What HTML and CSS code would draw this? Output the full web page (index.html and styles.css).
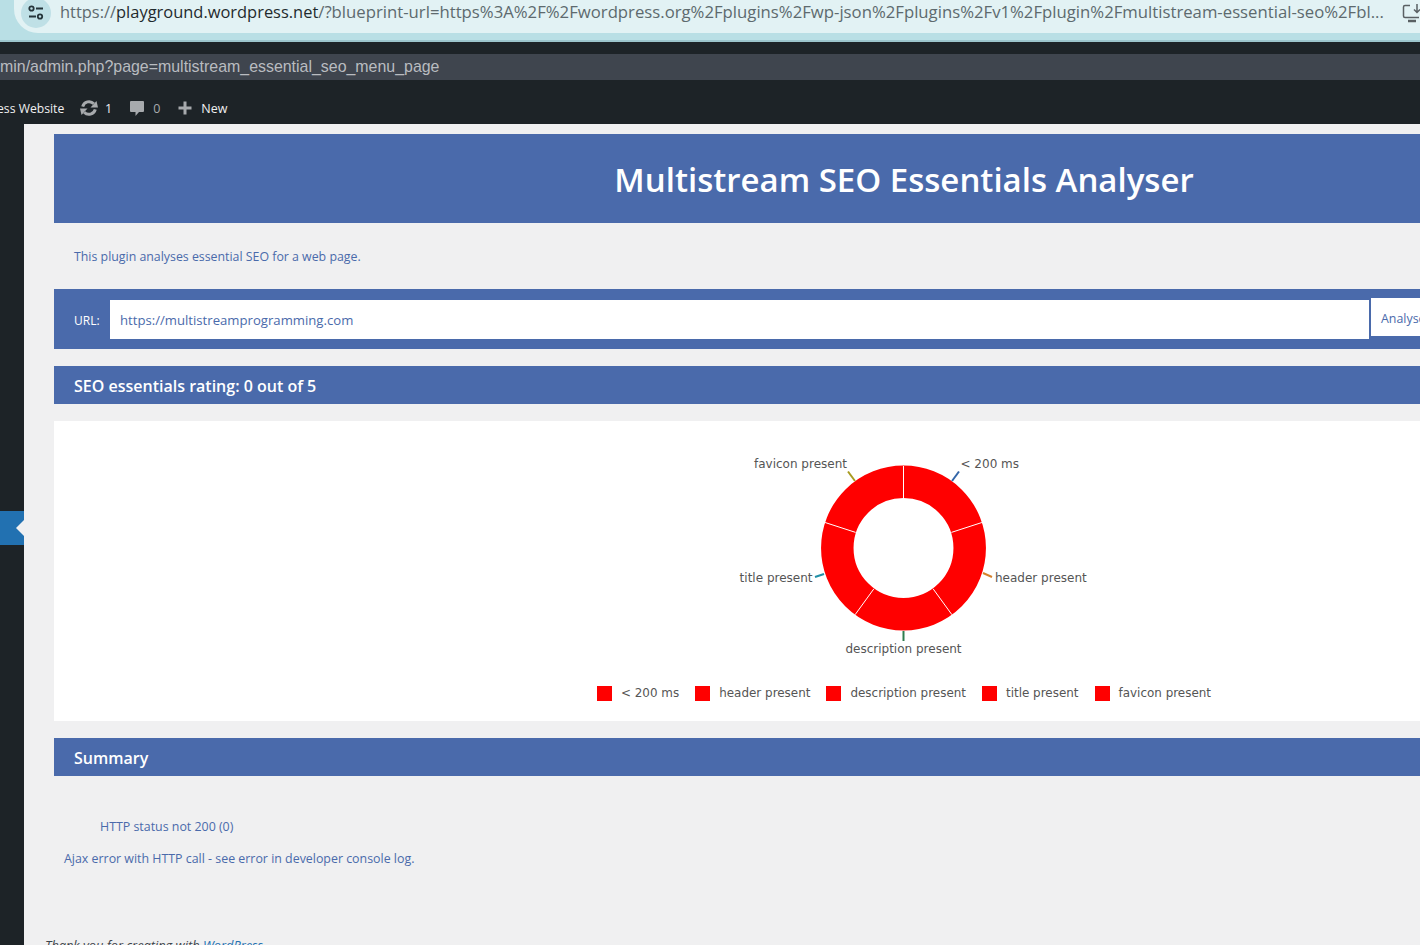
FILE: index.html
```html
<!DOCTYPE html>
<html lang="en">
<head>
<meta charset="utf-8">
<title>Multistream SEO Essentials Analyser</title>
<link rel="stylesheet" href="styles.css">
</head>
<body>
<header class="browser">
  <div class="omnibox">
    <span class="tune">
      <svg width="18" height="18" viewBox="0 0 18 18" fill="none" stroke="#24343a" stroke-width="1.800"><circle cx="4.500" cy="4.500" r="2.200"/><path d="M9 4.500h7M2 12.500h7"/><circle cx="13" cy="12.500" r="2.200"/></svg>
    </span>
    <span class="url"><span class="dim">https://</span>playground.wordpress.net<span class="dim rest">/?blueprint-url=https%3A%2F%2Fwordpress.org%2Fplugins%2Fwp-json%2Fplugins%2Fv1%2Fplugin%2Fmultistream-essential-seo%2Fbl...</span></span>
    <svg class="install" width="20" height="20" viewBox="0 0 20 20" fill="none" stroke="#5a6063" stroke-width="1.500"><path d="M8 2.500H3a1.500 1.500 0 0 0-1.500 1.500v9A1.500 1.500 0 0 0 3 14.500h14"/><path d="M6 18h8" stroke-width="2.500"/><path d="M15 1v8M12 6.500l3 3 3-3"/></svg>
  </div>
</header>
<div class="gap"></div>
<div class="addr">min/admin.php?page=multistream_essential_seo_menu_page</div>
<nav class="adminbar">
  <span class="site">ess Website</span>
  <span class="ab-item">
    <svg width="20" height="20" viewBox="0 0 20 20" fill="none"><g stroke="#a7aaad" stroke-width="3"><path d="M3.700 8.600A6.500 6.500 0 0 1 14.800 5.800"/><path d="M16.300 11.400A6.500 6.500 0 0 1 5.200 14.200"/></g><g fill="#a7aaad"><path d="M19 9.500h-7.500L17.500 3z"/><path d="M1 10.500h7.500L2.500 17z"/></g></svg>
    <span class="count">1</span>
  </span>
  <span class="ab-item">
    <svg width="20" height="20" viewBox="0 0 20 20" fill="#a7aaad"><path d="M4 3h12a1 1 0 0 1 1 1v9a1 1 0 0 1-1 1h-4l-3.500 4v-4H4a1 1 0 0 1-1-1V4a1 1 0 0 1 1-1z"/></svg>
    <span class="count muted">0</span>
  </span>
  <span class="ab-item">
    <svg width="20" height="20" viewBox="0 0 20 20" fill="#a7aaad"><path d="M8.500 3.500h3v5h5v3h-5v5h-3v-5h-5v-3h5z"/></svg>
    <span class="count">New</span>
  </span>
</nav>
<div class="wp">
  <aside class="sidebar"><span class="collapse"></span></aside>
  <main class="content">
    <h1 class="hero">Multistream SEO Essentials Analyser</h1>
    <p class="intro">This plugin analyses essential SEO for a web page.</p>
    <form class="urlbar">
      <label class="urllabel">URL:</label>
      <div class="urlinput">https://multistreamprogramming.com</div>
      <div class="analyse">Analyse</div>
    </form>
    <h2 class="band">SEO essentials rating: 0 out of 5</h2>
    <section class="chartcard">
      <svg class="donut" width="400" height="230" viewBox="0.500 0 400 230">
        <circle cx="200" cy="117" r="66.200" fill="none" stroke="#ff0000" stroke-width="32.500"/>
        <g stroke="#ffffff" stroke-width="1">
          <path d="M200 35v32"/>
          <path d="M278.400 91.500l-30.500 9.900"/>
          <path d="M248.400 183.700l-18.800-25.900"/>
          <path d="M151.600 183.700l18.800-25.900"/>
          <path d="M121.600 91.500l30.500 9.900"/>
        </g>
        <g fill="none" stroke-width="2">
          <path d="M248.500 50l7-9.500" stroke="#3366a8"/>
          <path d="M279.500 142l9 4" stroke="#d5812b"/>
          <path d="M200 200v10" stroke="#2f7d4f"/>
          <path d="M120.500 143l-9 3" stroke="#2090a8"/>
          <path d="M151.500 50l-7-9.500" stroke="#a89b20"/>
        </g>
        <g class="slabel">
          <text x="257" y="37">&lt; 200 ms</text>
          <text x="291.500" y="151">header present</text>
          <text x="200" y="222" text-anchor="middle">description present</text>
          <text x="109" y="151" text-anchor="end">title present</text>
          <text x="143.500" y="37" text-anchor="end">favicon present</text>
        </g>
      </svg>
      <ul class="legend">
        <li><i class="swatch"></i>&lt; 200 ms</li>
        <li><i class="swatch"></i>header present</li>
        <li><i class="swatch"></i>description present</li>
        <li><i class="swatch"></i>title present</li>
        <li><i class="swatch"></i>favicon present</li>
      </ul>
    </section>
    <h2 class="band">Summary</h2>
    <p class="status">HTTP status not 200 (0)</p>
    <p class="ajax">Ajax error with HTTP call - see error in developer console log.</p>
    <p class="thanks">Thank you for creating with <a href="#">WordPress</a>.</p>
  </main>
</div>
</body>
</html>
```
FILE: styles.css
```css
* { box-sizing: border-box; }
html, body { margin: 0; height: 945px; overflow: hidden; }
body { width: 1420px; background: #1d2327; font-family: "Open Sans", "Noto Sans", sans-serif; }

.browser { height: 42px; background: #b9dfe5; border-bottom: 2px solid #9cc5cc; overflow: hidden; }
.omnibox { height: 33px; margin-left: 14px; background: #e2f2f4; display: flex; align-items: center; padding-left: 7px; position: relative; border-radius: 0 0 0 24px; }
.tune { width: 30px; height: 30px; margin-top: -8px; border-radius: 50%; background: #bfe0e6; display: flex; align-items: center; justify-content: center; flex: none; }
.url { margin-left: 9px; margin-top: -10px; font-size: 16.450px; color: #1f2a2d; white-space: nowrap; flex: none; }
.dim { color: #5d6a6e; }
.rest { font-size: 16.730px; }
.install { position: absolute; left: 1388px; top: 3px; }

.gap { height: 12px; background: #1d2327; }
.addr { height: 26px; background: #3f454e; color: #b9bcc0; font-family: "Liberation Sans", Arial, sans-serif; font-size: 15.930px; line-height: 26px; white-space: nowrap; }

.adminbar { height: 44px; display: flex; align-items: center; padding-top: 12px; color: #f0f0f1; font-size: 12.500px; }
.site { width: 82px; margin-left: -3px; font-size: 12.200px; flex: none; }
.ab-item { display: flex; align-items: center; margin-right: 15px; }
.ab-item svg { margin-right: 6px; }
.count { color: #f0f0f1; }
.count.muted { color: #a7aaad; }

.wp { display: flex; height: 821px; overflow: hidden; }
.sidebar { width: 24px; flex: none; background: #1d2327; padding-top: 387px; }
.collapse { display: block; height: 34px; background: #2271b1; position: relative; }
.collapse::after { content: ""; position: absolute; right: 0; top: 9px; border: 8px solid transparent; border-right-color: #f0f0f1; border-left-width: 0; }

.content { width: 1730px; flex: none; background: #f0f0f1; padding: 10px 0 0 30px; color: #4a6aab; }
.hero { width: 1700px; height: 89px; margin: 0; background: #4a6aab; color: #fff; font-size: 33px; font-weight: 600; line-height: 91px; text-align: center; }
.intro { margin: 0; height: 66px; padding: 25px 0 0 20px; font-size: 12.350px; line-height: 18px; }
.urlbar { width: 1700px; height: 60px; background: #4a6aab; display: flex; align-items: flex-start; padding: 9px 0 0 20px; }
.urllabel { color: #fff; font-size: 12px; line-height: 18px; width: 36px; margin-top: 14px; flex: none; }
.urlinput { width: 1259px; height: 39px; margin-top: 2px; background: #fff; padding-left: 10px; font-size: 13.150px; line-height: 40px; flex: none; }
.analyse { width: 90px; height: 38px; margin-left: 2px; background: #fff; padding-left: 10px; font-size: 12.400px; line-height: 42px; flex: none; }
.band { width: 1700px; height: 38px; margin: 17px 0 0; padding-left: 20px; background: #4a6aab; color: #fff; font-size: 16px; font-weight: 600; line-height: 40px; }
.chartcard { width: 1700px; height: 300px; margin-top: 17px; background: #fff; display: flex; flex-direction: column; align-items: center; }
.donut { display: block; margin-top: 10px; flex: none; }
.slabel text { font-family: "DejaVu Sans", Verdana, sans-serif; font-size: 12px; fill: #555; }
.legend { list-style: none; margin: 24px 0 0; padding: 0; display: flex; gap: 16px; font-family: "DejaVu Sans", Verdana, sans-serif; font-size: 11.950px; color: #555; line-height: 16px; }
.legend li { display: flex; align-items: center; white-space: nowrap; }
.swatch { width: 15px; height: 15px; margin-right: 9px; background: #ff0000; flex: none; }
.status { margin: 42px 0 0 46px; font-size: 12.400px; line-height: 18px; }
.ajax { margin: 14px 0 0 10px; font-size: 12.400px; line-height: 18px; }
.thanks { margin: 68px 0 0 -9px; font-size: 12.800px; font-style: italic; color: #3c434a; line-height: 18px; }
.thanks a { color: #2271b1; }
```
